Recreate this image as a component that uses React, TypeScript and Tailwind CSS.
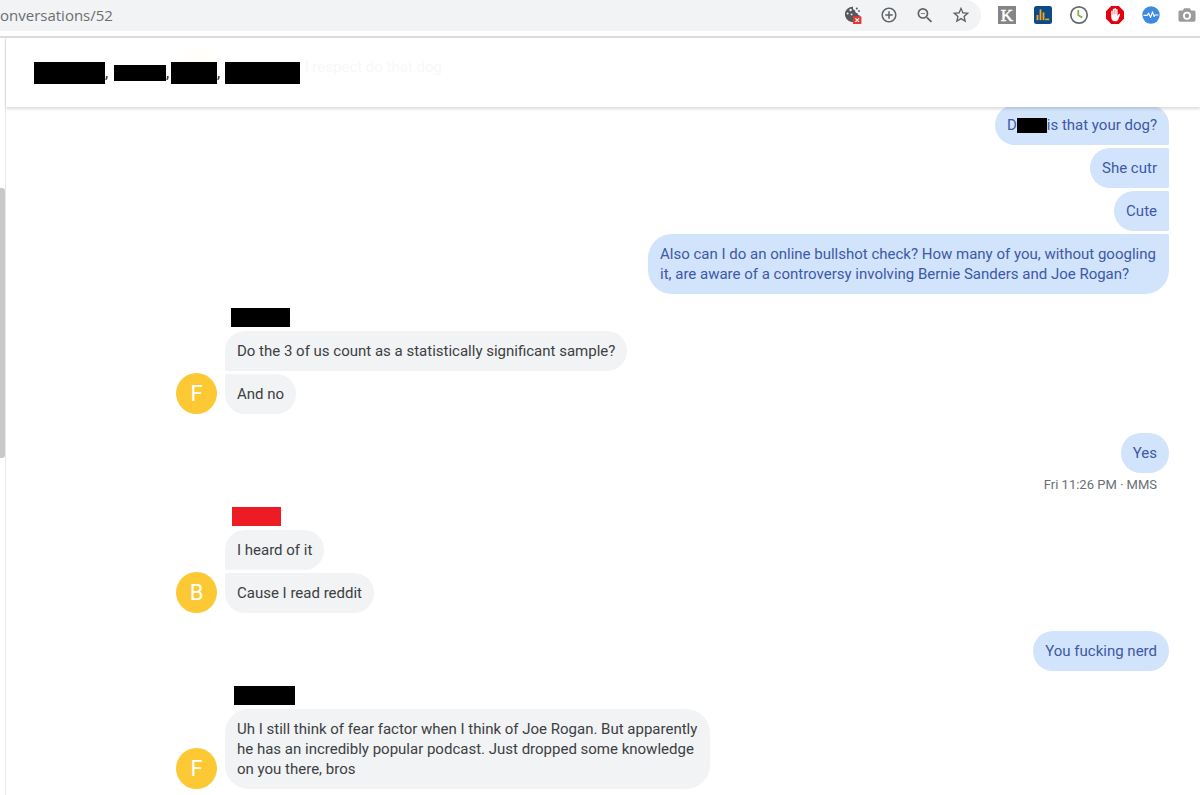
import React, { useState } from 'react';
import { clsx } from 'clsx';
import { MdAddCircleOutline, MdStarBorder, MdZoomOut } from 'react-icons/md';

interface Message {
    text: string;
    // the rest of the name after its first letter is blacked out
    hidden?: boolean;
}

interface Group {
    id: number;
    from: 'me' | 'them';
    initial?: string;
    nameClass?: string;
    spacing: string;
    status?: string;
    messages: Message[];
}

const groups: Group[] = [
    {
        id: 1,
        from: 'me',
        spacing: '',
        messages: [
            { text: 'is that your dog?', hidden: true },
            { text: 'She cutr' },
            { text: 'Cute' },
            { text: 'Also can I do an online bullshot check? How many of you, without googling it, are aware of a controversy involving Bernie Sanders and Joe Rogan?' },
        ],
    },
    {
        id: 2,
        from: 'them',
        initial: 'F',
        nameClass: 'ml-[6px] w-[59px] bg-black',
        spacing: 'mt-[14px]',
        messages: [
            { text: 'Do the 3 of us count as a statistically significant sample?' },
            { text: 'And no' },
        ],
    },
    { id: 3, from: 'me', spacing: 'mt-[19px]', status: 'Fri 11:26 PM · MMS', messages: [{ text: 'Yes' }] },
    {
        id: 4,
        from: 'them',
        initial: 'B',
        nameClass: 'ml-[7px] w-[49px] bg-[#ed1c24]',
        spacing: 'mt-[13px]',
        messages: [{ text: 'I heard of it' }, { text: 'Cause I read reddit' }],
    },
    { id: 5, from: 'me', spacing: 'mt-[18px]', messages: [{ text: 'You fucking nerd' }] },
    {
        id: 6,
        from: 'them',
        initial: 'F',
        nameClass: 'ml-[9px] w-[61px] bg-black',
        spacing: 'mt-[15px]',
        messages: [
            { text: 'Uh I still think of fear factor when I think of Joe Rogan. But apparently he has an incredibly popular podcast. Just dropped some knowledge on you there, bros' },
        ],
    },
];

function CookieIcon() {
    return (
        <svg viewBox="0 0 20 20" className="size-5">
            <path d="M10.200 1.800a7.600 7.600 0 1 0 6.800 8.600 2.400 2.400 0 0 1-2.600-2.300 2.300 2.300 0 0 1-2.300-2.800 2.300 2.300 0 0 1-1.900-3.500z" fill="#55595e" />
            <g fill="#f1f3f4">
                <circle cx="7.600" cy="5" r="1.200" />
                <circle cx="4.600" cy="8.400" r="1" />
                <circle cx="8.600" cy="9.400" r="0.900" />
            </g>
            <circle cx="13.800" cy="3.600" r="1" fill="#55595e" />
            <circle cx="16" cy="6" r="0.900" fill="#55595e" />
            <rect x="10" y="11.200" width="8.400" height="7.800" rx="0.600" fill="#e53935" />
            <path d="M12.400 13.300l3.600 3.600M16 13.300l-3.600 3.600" stroke="#fff" strokeWidth="1.200" />
        </svg>
    );
}

function KIcon() {
    return (
        <svg viewBox="0 0 20 20" className="size-5">
            <rect x="1" y="1" width="18" height="18" fill="#858585" />
            <text x="10" y="16" textAnchor="middle" fontSize="17" fontFamily="Liberation Serif, serif" fill="#fff" stroke="#fff" strokeWidth="0.5">K</text>
        </svg>
    );
}

function ChartIcon() {
    return (
        <svg viewBox="0 0 20 20" className="size-5">
            <rect x="1" y="1" width="18" height="18" rx="2.5" fill="#0d4a86" />
            <g fill="#f5a623">
                <rect x="3.6" y="10" width="1.8" height="5.2" />
                <rect x="6.6" y="4.4" width="1.8" height="10.8" />
                <rect x="9.6" y="7.4" width="1.8" height="7.8" />
                <rect x="12.2" y="13.6" width="4" height="1.6" />
            </g>
        </svg>
    );
}

function ClockIcon() {
    return (
        <svg viewBox="0 0 20 20" className="size-5">
            <circle cx="10" cy="10" r="8.2" fill="#fff" stroke="#666a6d" strokeWidth="1.7" />
            <path d="M9.3 5v5.2l4 2.3" fill="none" stroke="#7cb342" strokeWidth="1.8" />
        </svg>
    );
}

function HandIcon() {
    return (
        <svg viewBox="0 0 20 20" className="size-5">
            <path d="M6.2 1h7.6L19 6.2v7.6L13.8 19H6.2L1 13.8V6.2z" fill="#e3000f" />
            <path
                d="M6.2 11.4V6.2a.8.8 0 0 1 1.6 0V4.6a.8.8 0 0 1 1.6 0v-.8a.8.8 0 0 1 1.6 0v.9a.8.8 0 0 1 1.6 0v6.2l1-1.7c.6-.9 1.8-.4 1.5.5l-1.6 4.2c-.6 1.6-1.6 2.4-3.2 2.4-2.6 0-4.1-1.6-4.1-4.9z"
                fill="#fff"
            />
            <path d="M7.8 5.6v4M9.4 4.8v4.6M11 5v4.6" stroke="#e3000f" strokeWidth="0.35" />
        </svg>
    );
}

function PulseIcon() {
    return (
        <svg viewBox="0 0 20 20" className="size-5">
            <circle cx="10" cy="10" r="8.7" fill="#3d8be0" />
            <path d="M2.6 10.4h3.6l1.4-2.2 2 4.2 2-5.6 1.6 4.8.9-1.6h3.3" fill="none" stroke="#fff" strokeWidth="1.1" strokeLinejoin="round" />
        </svg>
    );
}

function CameraIcon() {
    return (
        <svg viewBox="0 0 20 20" className="size-5">
            <path d="M7.2 3.2h5.6l1.4 2.2h2.6c1 0 1.7.7 1.7 1.7v8c0 1-.7 1.7-1.7 1.7H3.2c-1 0-1.7-.7-1.7-1.7v-8c0-1 .7-1.7 1.7-1.7h2.6z" fill="#9b9b9b" />
            <circle cx="10" cy="10.8" r="3.1" fill="none" stroke="#fff" strokeWidth="1.8" />
        </svg>
    );
}

const pageActions = [
    { label: 'Cookies blocked', icon: <CookieIcon /> },
    { label: 'Install', icon: <MdAddCircleOutline className="size-[18px]" /> },
    { label: 'Zoom', icon: <MdZoomOut className="size-[21px]" /> },
    { label: 'Bookmark', icon: <MdStarBorder className="size-5" /> },
];

const extensions = [
    { label: 'Keywords', icon: <KIcon /> },
    { label: 'Analytics', icon: <ChartIcon /> },
    { label: 'History', icon: <ClockIcon /> },
    { label: 'Blocker', icon: <HandIcon /> },
    { label: 'Monitor', icon: <PulseIcon /> },
    { label: 'Capture', icon: <CameraIcon /> },
];

function IconButton({ label, children }: { label: string; children: React.ReactNode }) {
    return (
        <button type="button" aria-label={label} className="flex size-5 shrink-0 items-center justify-center text-[#5f6368]">
            {children}
        </button>
    );
}

function BrowserBar() {
    const [url, setUrl] = useState('onversations/52');

    return (
        <div className="flex shrink-0 items-start gap-4 border-b-2 border-[#dadce0] bg-white pr-[3px] pb-[5px]">
            <div className="flex h-[31px] min-w-0 flex-1 items-center gap-4 rounded-r-full bg-[#f1f3f4] pr-[10px] pb-px">
                <input
                    type="text"
                    aria-label="Address"
                    value={url}
                    onChange={(e) => setUrl(e.target.value)}
                    className="min-w-0 flex-1 bg-transparent font-['Open_Sans',sans-serif] text-[15px] leading-5 text-[#6b6f73] outline-none"
                />
                {pageActions.map(a => <IconButton key={a.label} label={a.label}>{a.icon}</IconButton>)}
            </div>
            <div className="flex h-[30px] items-center gap-4">
                {extensions.map(a => <IconButton key={a.label} label={a.label}>{a.icon}</IconButton>)}
            </div>
        </div>
    );
}

function ConversationHeader() {
    return (
        <header className="relative z-10 flex h-[69px] shrink-0 items-center bg-white pl-7 text-base text-[#202124] shadow-[0_2px_3px_rgba(0,0,0,0.14)]">
            <div aria-hidden="true" className="absolute top-2 left-[170px] size-[41px] rounded-full bg-[#fffefa]" />
            <p className="absolute top-[19px] left-[299px] text-[15px] leading-5 text-[#f7f8f8]">l respect do that dog</p>
            <h1 className="relative flex items-center">
                <span className="h-[22px] w-[71px] bg-black" />
                <span className="w-[9px]">,</span>
                <span className="h-4 w-[52px] bg-black" />
                <span className="w-[5px]">,</span>
                <span className="h-[22px] w-[46px] bg-black" />
                <span className="w-2">,</span>
                <span className="h-[22px] w-[75px] bg-black" />
            </h1>
        </header>
    );
}

function Bubble({ message, mine, first, last }: { message: Message; mine: boolean; first: boolean; last: boolean }) {
    return (
        <li
            className={clsx(
                'px-3 py-[10px] text-[15px] leading-5',
                mine ? 'max-w-[521px] rounded-l-[24px] bg-[#d2e3fc] text-[#3c5aa6]' : 'max-w-[485px] rounded-r-[24px] bg-[#f1f3f4] text-[#3c4043]',
                mine && (first ? 'rounded-tr-[24px]' : 'rounded-tr-[2px]'),
                mine && (last ? 'rounded-br-[24px]' : 'rounded-br-[2px]'),
                !mine && (first ? 'rounded-tl-[24px]' : 'rounded-tl-[2px]'),
                !mine && (last ? 'rounded-bl-[24px]' : 'rounded-bl-[2px]'),
            )}
        >
            {message.hidden && <>D<span className="inline-block h-[15px] w-[30px] bg-black align-[-3px]" /></>}
            {message.text}
        </li>
    );
}

function MessageGroup({ group }: { group: Group }) {
    const mine = group.from === 'me';
    const bubbles = (
        <ul className={clsx('flex flex-col gap-[3px]', mine ? 'items-end' : 'items-start')}>
            {group.messages.map((m, i) => (
                <Bubble key={m.text} message={m} mine={mine} first={i === 0} last={i === group.messages.length - 1} />
            ))}
        </ul>
    );

    if (mine) {
        return (
            <section className={group.spacing}>
                {bubbles}
                {group.status && <p className="mt-[3px] pr-3 text-right text-[13px] leading-[18px] text-[#6b6f73]">{group.status}</p>}
            </section>
        );
    }

    return (
        <section className={clsx('flex items-end gap-2', group.spacing)}>
            <div className="flex size-[41px] shrink-0 items-center justify-center rounded-full bg-[#fcc934] text-[22px] leading-none text-white">
                {group.initial}
            </div>
            <div>
                <div className={clsx('mb-1 h-[19px]', group.nameClass)} />
                {bubbles}
            </div>
        </section>
    );
}

export default function App() {
    return (
        <div className="flex h-screen flex-col overflow-hidden bg-white font-[Roboto,sans-serif]">
            <BrowserBar />
            <div className="flex min-h-0 flex-1">
                <aside className="w-[6px] shrink-0 border-r border-[#e8e8e8] pt-[150px]">
                    <div className="h-[270px] rounded-r-[3px] bg-[#c8c8c8]" />
                </aside>
                <div className="flex min-w-0 flex-1 flex-col">
                    <ConversationHeader />
                    <main className="-mt-[2px] min-h-0 flex-1 overflow-hidden pr-[31px] pl-[170px]">
                        {groups.map(g => <MessageGroup key={g.id} group={g} />)}
                    </main>
                </div>
            </div>
        </div>
    );
}
